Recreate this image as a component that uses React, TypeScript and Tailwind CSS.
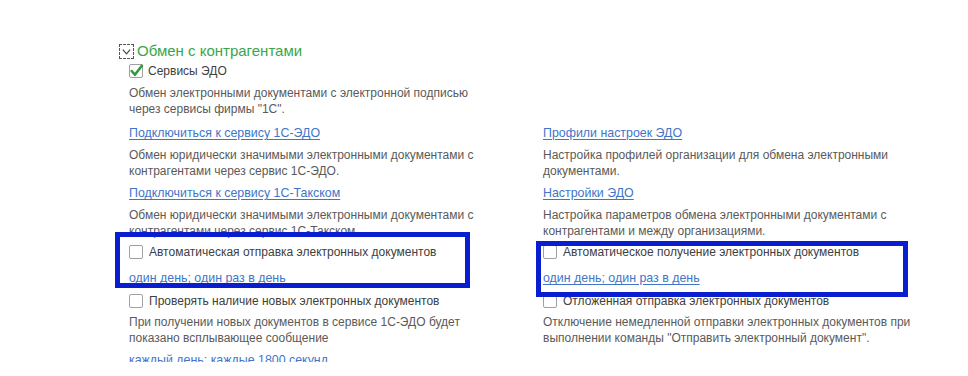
import React from 'react';

const font = { fontFamily: '"Liberation Sans", Arial, sans-serif' };

const Box: React.FC<{ checked?: boolean }> = ({ checked }) => (
  <span className="relative inline-flex w-[14px] h-[14px] shrink-0 border border-[#a0a0a0] rounded-[2px] bg-white">
    {checked && (
      <svg viewBox="0 0 14 14" className="absolute -left-[1px] -top-[2px] w-[15px] h-[15px]">
        <path d="M2.5 7.5 L5.5 11 L12 2.5" fill="none" stroke="#2f9a3c" strokeWidth="2.4" strokeLinecap="round" strokeLinejoin="round" />
      </svg>
    )}
  </span>
);

const Desc: React.FC<{ lines: string[]; className?: string }> = ({ lines, className = '' }) => (
  <div className={`text-[12px] leading-4 text-[#5a5a5a] whitespace-nowrap ${className}`}>
    {lines.map((l, i) => (
      <div key={i}>{l}</div>
    ))}
  </div>
);

const Link: React.FC<{ text: string; className?: string }> = ({ text, className = '' }) => (
  <div className={`h-4 leading-4 text-[12.4px] text-[#4175c8] underline underline-offset-2 whitespace-nowrap ${className}`}>
    {text}
  </div>
);

const Check: React.FC<{ label: string; checked?: boolean; className?: string; gap?: string }> = ({
  label,
  checked,
  className = '',
  gap = 'gap-[6px]',
}) => (
  <div className={`flex items-center h-4 ${gap} ${className}`}>
    <Box checked={checked} />
    <span className="text-[12px] leading-4 text-[#404040] whitespace-nowrap">{label}</span>
  </div>
);

const App: React.FC = () => {
  return (
    <div className="relative w-[968px] h-[376px] bg-white overflow-hidden" style={font}>
      <div className="h-[362px] overflow-hidden pt-[42px] pl-[119px]">
        {/* Заголовок группы */}
        <div className="flex items-center gap-[3px] h-[18px]">
          <span className="inline-flex items-center justify-center w-[15px] h-[15px] border border-dashed border-[#555]">
            <svg viewBox="0 0 12 12" className="w-[11px] h-[11px]">
              <path d="M2 4 L6 8.5 L10 4" fill="none" stroke="#444" strokeWidth="1.3" />
            </svg>
          </span>
          <span className="text-[15px] leading-[18px] text-[#3aa64a] whitespace-nowrap">Обмен с контрагентами</span>
        </div>

        <div className="pl-[10px]">
          <Check label="Сервисы ЭДО" checked className="mt-[3px]" gap="gap-[5px]" />
          <Desc
            className="mt-[6px]"
            lines={['Обмен электронными документами с электронной подписью', 'через сервисы фирмы "1С".']}
          />

          <div className="grid grid-cols-[414px_1fr] mt-[8px]">
            {/* Левая колонка */}
            <div className="flex flex-col">
              <Link text="Подключиться к сервису 1С-ЭДО" />
              <Desc
                className="mt-[6px]"
                lines={['Обмен юридически значимыми электронными документами с', 'контрагентами через сервис 1С-ЭДО.']}
              />
              <Link text="Подключиться к сервису 1С-Такском" className="mt-[6px]" />
              <Desc
                className="mt-[6px]"
                lines={['Обмен юридически значимыми электронными документами с', 'контрагентами через сервис 1С-Такском.']}
              />
              <Check label="Автоматическая отправка электронных документов" className="mt-[5px]" />
              <Link text="один день; один раз в день" className="mt-[10px]" />
              <Check label="Проверять наличие новых электронных документов" className="mt-[7px]" />
              <Desc
                className="mt-[5px]"
                lines={['При получении новых документов в сервисе 1С-ЭДО будет', 'показано всплывающее сообщение']}
              />
              <Link text="каждый день; каждые 1800 секунд" className="mt-[6px]" />
            </div>

            {/* Правая колонка */}
            <div className="flex flex-col">
              <Link text="Профили настроек ЭДО" />
              <Desc
                className="mt-[6px]"
                lines={['Настройка профилей организации для обмена электронными', 'документами.']}
              />
              <Link text="Настройки ЭДО" className="mt-[6px]" />
              <Desc
                className="mt-[6px]"
                lines={['Настройка параметров обмена электронными документами с', 'контрагентами и между организациями.']}
              />
              <Check label="Автоматическое получение электронных документов" className="mt-[5px]" />
              <Link text="один день; один раз в день" className="mt-[10px]" />
              <Check label="Отложенная отправка электронных документов" className="mt-[7px]" />
              <Desc
                className="mt-[5px]"
                lines={['Отключение немедленной отправки электронных документов при', 'выполнении команды "Отправить электронный документ".']}
              />
            </div>
          </div>
        </div>
      </div>

      {/* Выделение рамками */}
      <div className="absolute left-[115px] top-[232px] w-[355px] h-[56px] border-[5px] border-[#0a1ecf]" />
      <div className="absolute left-[536px] top-[241px] w-[372px] h-[56px] border-[5px] border-[#0a1ecf]" />
    </div>
  );
};

export default App;
